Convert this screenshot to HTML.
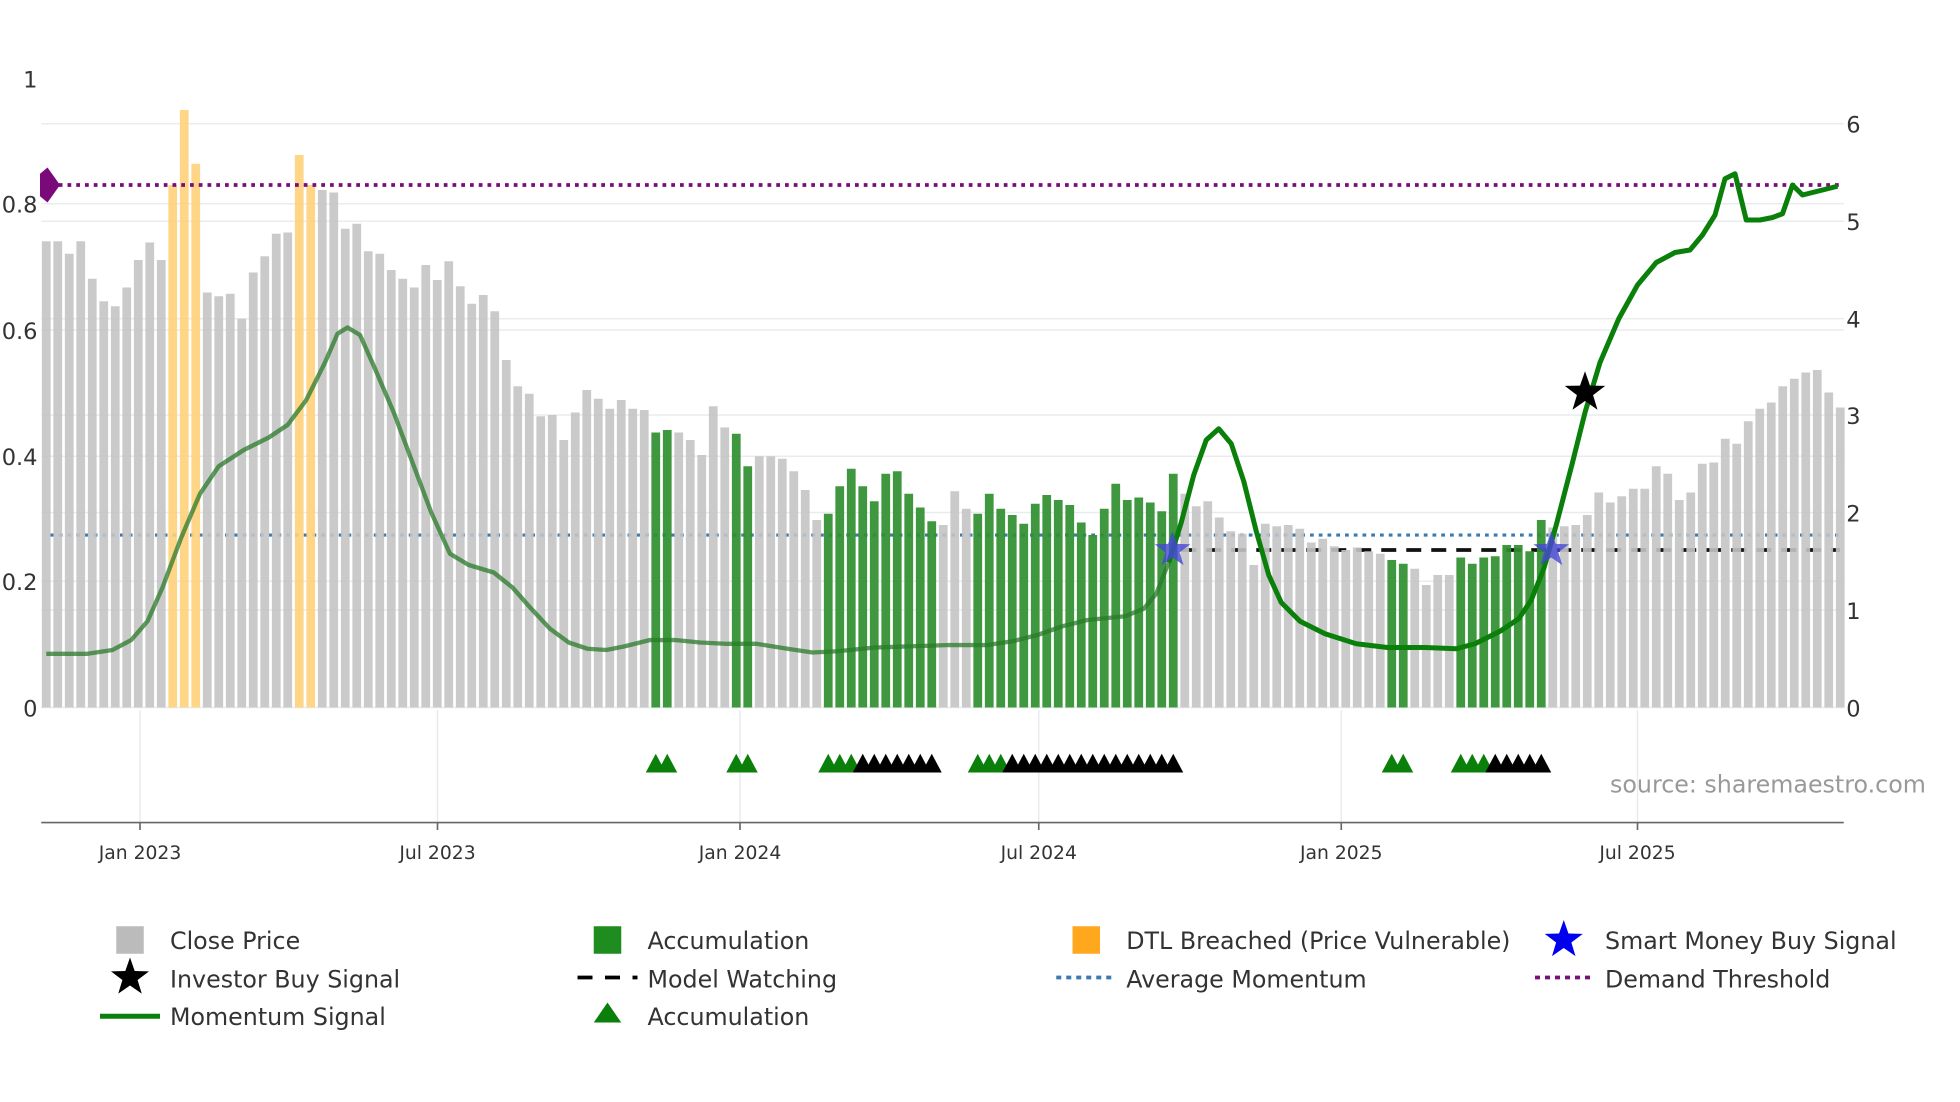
<!DOCTYPE html>
<html><head><meta charset="utf-8"><style>
html,body{margin:0;padding:0;background:#fff;}
svg{display:block;}
text{font-family:"DejaVu Sans","Liberation Sans",sans-serif;fill:#333;}
</style></head><body>
<svg width="1960" height="1102" viewBox="0 0 1568 881.6" preserveAspectRatio="none" xmlns="http://www.w3.org/2000/svg">
<defs>
<path id="st" d="M0,-1 L.235,-.324 L.951,-.309 L.380,.124 L.588,.809 L0,.4 L-.588,.809 L-.380,.124 L-.951,-.309 L-.235,-.324Z"/>
<path id="tri" d="M-8,7 L0,-8 L8,7Z"/>
</defs>
<rect width="1568" height="882" fill="#fff"/>
<!-- grid -->
<g stroke="#e8ecf0" stroke-width="1.2">
<line x1="33" x2="1475" y1="99" y2="99"/><line x1="33" x2="1475" y1="177" y2="177"/><line x1="33" x2="1475" y1="255" y2="255"/><line x1="33" x2="1475" y1="332" y2="332"/><line x1="33" x2="1475" y1="410" y2="410"/><line x1="33" x2="1475" y1="488" y2="488"/>
<line x1="33" x2="1475" y1="163" y2="163"/><line x1="33" x2="1475" y1="264" y2="264"/><line x1="33" x2="1475" y1="365" y2="365"/><line x1="33" x2="1475" y1="465" y2="465"/><line x1="33" x2="1475" y1="566" y2="566"/>
<line x1="112" x2="112" y1="568" y2="658"/><line x1="350" x2="350" y1="568" y2="658"/><line x1="592" x2="592" y1="568" y2="658"/><line x1="831" x2="831" y1="568" y2="658"/><line x1="1073" x2="1073" y1="568" y2="658"/><line x1="1310" x2="1310" y1="568" y2="658"/>
</g>
<line x1="40" x2="1475" y1="428" y2="428" stroke="#3a7ab0" stroke-width="2.5" stroke-dasharray="3,4"/>
<line x1="945" x2="1472" y1="440" y2="440" stroke="#111" stroke-width="3" stroke-dasharray="12,8"/>
<!-- bars gray -->
<g fill="#c4c4c4" fill-opacity="0.9">
<rect x="33.5" y="193" width="7" height="373"/><rect x="42.7" y="193" width="7" height="373"/><rect x="51.9" y="203" width="7" height="363"/><rect x="61.1" y="193" width="7" height="373"/><rect x="70.3" y="223" width="7" height="343"/><rect x="79.5" y="241" width="7" height="325"/><rect x="88.7" y="245" width="7" height="321"/><rect x="97.9" y="230" width="7" height="336"/><rect x="107.1" y="208" width="7" height="358"/><rect x="116.3" y="194" width="7" height="372"/><rect x="125.5" y="208" width="7" height="358"/>
<rect x="162.3" y="234" width="7" height="332"/><rect x="171.5" y="237" width="7" height="329"/><rect x="180.7" y="235" width="7" height="331"/><rect x="189.9" y="255" width="7" height="311"/><rect x="199.1" y="218" width="7" height="348"/><rect x="208.3" y="205" width="7" height="361"/><rect x="217.5" y="187" width="7" height="379"/><rect x="226.7" y="186" width="7" height="380"/>
<rect x="254.3" y="152" width="7" height="414"/><rect x="263.5" y="154" width="7" height="412"/><rect x="272.7" y="183" width="7" height="383"/><rect x="281.9" y="179" width="7" height="387"/><rect x="291.1" y="201" width="7" height="365"/><rect x="300.3" y="203" width="7" height="363"/><rect x="309.5" y="216" width="7" height="350"/><rect x="318.7" y="223" width="7" height="343"/><rect x="327.9" y="230" width="7" height="336"/><rect x="337.1" y="212" width="7" height="354"/><rect x="346.3" y="224" width="7" height="342"/><rect x="355.5" y="209" width="7" height="357"/><rect x="364.7" y="229" width="7" height="337"/><rect x="373.9" y="243" width="7" height="323"/><rect x="383.1" y="236" width="7" height="330"/><rect x="392.3" y="249" width="7" height="317"/><rect x="401.5" y="288" width="7" height="278"/><rect x="410.7" y="309" width="7" height="257"/><rect x="419.9" y="315" width="7" height="251"/><rect x="429.1" y="333" width="7" height="233"/><rect x="438.3" y="332" width="7" height="234"/><rect x="447.5" y="352" width="7" height="214"/><rect x="456.7" y="330" width="7" height="236"/><rect x="465.9" y="312" width="7" height="254"/><rect x="475.1" y="319" width="7" height="247"/><rect x="484.3" y="327" width="7" height="239"/><rect x="493.5" y="320" width="7" height="246"/><rect x="502.7" y="327" width="7" height="239"/><rect x="511.9" y="328" width="7" height="238"/>
<rect x="539.5" y="346" width="7" height="220"/><rect x="548.7" y="352" width="7" height="214"/><rect x="557.9" y="364" width="7" height="202"/><rect x="567.1" y="325" width="7" height="241"/><rect x="576.3" y="342" width="7" height="224"/>
<rect x="603.9" y="365" width="7" height="201"/><rect x="613.1" y="365" width="7" height="201"/><rect x="622.3" y="367" width="7" height="199"/><rect x="631.5" y="377" width="7" height="189"/><rect x="640.7" y="392" width="7" height="174"/><rect x="649.9" y="416" width="7" height="150"/>
<rect x="751.1" y="420" width="7" height="146"/><rect x="760.3" y="393" width="7" height="173"/><rect x="769.5" y="407" width="7" height="159"/>
<rect x="944.3" y="395" width="7" height="171"/><rect x="953.5" y="405" width="7" height="161"/><rect x="962.7" y="401" width="7" height="165"/><rect x="971.9" y="414" width="7" height="152"/><rect x="981.1" y="425" width="7" height="141"/><rect x="990.3" y="427" width="7" height="139"/><rect x="999.5" y="452" width="7" height="114"/><rect x="1008.7" y="419" width="7" height="147"/><rect x="1017.9" y="421" width="7" height="145"/><rect x="1027.1" y="420" width="7" height="146"/><rect x="1036.3" y="423" width="7" height="143"/><rect x="1045.5" y="434" width="7" height="132"/><rect x="1054.7" y="431" width="7" height="135"/><rect x="1063.9" y="437" width="7" height="129"/><rect x="1073.1" y="440" width="7" height="126"/><rect x="1082.3" y="438" width="7" height="128"/><rect x="1091.5" y="441" width="7" height="125"/><rect x="1100.7" y="443" width="7" height="123"/>
<rect x="1128.3" y="455" width="7" height="111"/><rect x="1137.5" y="468" width="7" height="98"/><rect x="1146.7" y="460" width="7" height="106"/><rect x="1155.9" y="460" width="7" height="106"/>
<rect x="1238.7" y="422" width="7" height="144"/><rect x="1247.9" y="421" width="7" height="145"/><rect x="1257.1" y="420" width="7" height="146"/><rect x="1266.3" y="412" width="7" height="154"/><rect x="1275.5" y="394" width="7" height="172"/><rect x="1284.7" y="402" width="7" height="164"/><rect x="1293.9" y="397" width="7" height="169"/><rect x="1303.1" y="391" width="7" height="175"/><rect x="1312.3" y="391" width="7" height="175"/><rect x="1321.5" y="373" width="7" height="193"/><rect x="1330.7" y="379" width="7" height="187"/><rect x="1339.9" y="400" width="7" height="166"/><rect x="1349.1" y="394" width="7" height="172"/><rect x="1358.3" y="371" width="7" height="195"/><rect x="1367.5" y="370" width="7" height="196"/><rect x="1376.7" y="351" width="7" height="215"/><rect x="1385.9" y="355" width="7" height="211"/><rect x="1395.1" y="337" width="7" height="229"/><rect x="1404.3" y="327" width="7" height="239"/><rect x="1413.5" y="322" width="7" height="244"/><rect x="1422.7" y="309" width="7" height="257"/><rect x="1431.9" y="303" width="7" height="263"/><rect x="1441.1" y="298" width="7" height="268"/><rect x="1450.3" y="296" width="7" height="270"/><rect x="1459.5" y="314" width="7" height="252"/><rect x="1468.7" y="326" width="7" height="240"/>
</g>
<g fill="#ffd27a" fill-opacity="0.9">
<rect x="134.7" y="148" width="7" height="418"/><rect x="143.9" y="88" width="7" height="478"/><rect x="153.1" y="131" width="7" height="435"/><rect x="235.9" y="124" width="7" height="442"/><rect x="245.1" y="148" width="7" height="418"/>
</g>
<g fill="#2f8f2f" fill-opacity="0.92">
<rect x="521.1" y="346" width="7" height="220"/><rect x="530.3" y="344" width="7" height="222"/>
<rect x="585.5" y="347" width="7" height="219"/><rect x="594.7" y="373" width="7" height="193"/>
<rect x="659.1" y="411" width="7" height="155"/><rect x="668.3" y="389" width="7" height="177"/><rect x="677.5" y="375" width="7" height="191"/><rect x="686.7" y="389" width="7" height="177"/><rect x="695.9" y="401" width="7" height="165"/><rect x="705.1" y="379" width="7" height="187"/><rect x="714.3" y="377" width="7" height="189"/><rect x="723.5" y="395" width="7" height="171"/><rect x="732.7" y="406" width="7" height="160"/><rect x="741.9" y="417" width="7" height="149"/>
<rect x="778.7" y="411" width="7" height="155"/><rect x="787.9" y="395" width="7" height="171"/><rect x="797.1" y="407" width="7" height="159"/><rect x="806.3" y="412" width="7" height="154"/><rect x="815.5" y="419" width="7" height="147"/><rect x="824.7" y="403" width="7" height="163"/><rect x="833.9" y="396" width="7" height="170"/><rect x="843.1" y="400" width="7" height="166"/><rect x="852.3" y="404" width="7" height="162"/><rect x="861.5" y="418" width="7" height="148"/><rect x="870.7" y="428" width="7" height="138"/><rect x="879.9" y="407" width="7" height="159"/><rect x="889.1" y="387" width="7" height="179"/><rect x="898.3" y="400" width="7" height="166"/><rect x="907.5" y="398" width="7" height="168"/><rect x="916.7" y="402" width="7" height="164"/><rect x="925.9" y="409" width="7" height="157"/><rect x="935.1" y="379" width="7" height="187"/>
<rect x="1109.9" y="448" width="7" height="118"/><rect x="1119.1" y="451" width="7" height="115"/>
<rect x="1165.1" y="446" width="7" height="120"/><rect x="1174.3" y="451" width="7" height="115"/><rect x="1183.5" y="446" width="7" height="120"/><rect x="1192.7" y="445" width="7" height="121"/><rect x="1201.9" y="436" width="7" height="130"/><rect x="1211.1" y="436" width="7" height="130"/><rect x="1220.3" y="441" width="7" height="125"/><rect x="1229.5" y="416" width="7" height="150"/>
</g>
<!-- momentum line faded part -->
<polyline fill="none" stroke="#2a7a2a" stroke-opacity="0.75" stroke-width="3.5" stroke-linejoin="round" points="37,523 70,523 90,520 105,512 118,497 130,470 145,430 160,395 175,373 195,360 215,350 230,340 245,320 260,290 270,267 278,262 288,268 300,295 315,330 330,370 345,410 360,443 375,452 395,458 410,470 425,487 440,503 455,514 470,519 485,520 500,517 520,512 540,512 560,514 580,515 605,515 630,519 650,522 670,521 700,518 730,517 760,516 790,516 810,513 830,508 850,501 870,496 900,493 915,487 925,475 935,450"/>
<!-- demand threshold -->
<line x1="40" x2="1475" y1="148" y2="148" stroke="#7a0f7a" stroke-width="3" stroke-dasharray="3,4"/>
<path d="M32,139 L38,134 L48,148 L38,162 L32,157Z" fill="#7a0a7a"/>
<!-- bright momentum -->
<polyline fill="none" stroke="#0a800a" stroke-width="4" stroke-linejoin="round" points="935,450 945,418 955,380 965,352 975,343 985,355 995,385 1005,425 1015,460 1025,482 1040,497 1060,507 1085,515 1110,518 1140,518 1165,519 1180,515 1200,505 1215,495 1225,480 1235,455 1245,420 1258,370 1268,330 1280,290 1295,255 1310,228 1325,210 1340,202 1352,200 1362,188 1372,172 1380,143 1388,139 1397,176 1408,176 1418,174 1426,171 1434,148 1442,156 1470,149"/>
<!-- stars -->
<use href="#st" transform="translate(938,440) scale(15)" fill="#4646d8" fill-opacity="0.8"/>
<use href="#st" transform="translate(1241,440) scale(15)" fill="#4646d8" fill-opacity="0.8"/>
<use href="#st" transform="translate(1268,314) scale(17)" fill="#000"/>
<!-- triangles -->
<g fill="#0a800a">
<use href="#tri" x="524.6" y="611"/><use href="#tri" x="533.8" y="611"/><use href="#tri" x="589" y="611"/><use href="#tri" x="598.2" y="611"/>
<use href="#tri" x="662.6" y="611"/><use href="#tri" x="671.8" y="611"/><use href="#tri" x="681" y="611"/>
<use href="#tri" x="782.2" y="611"/><use href="#tri" x="791.4" y="611"/><use href="#tri" x="800.6" y="611"/>
<use href="#tri" x="1113.4" y="611"/><use href="#tri" x="1122.6" y="611"/>
<use href="#tri" x="1168.6" y="611"/><use href="#tri" x="1177.8" y="611"/><use href="#tri" x="1187" y="611"/>
</g>
<g fill="#000">
<use href="#tri" x="690.2" y="611"/><use href="#tri" x="699.4" y="611"/><use href="#tri" x="708.6" y="611"/><use href="#tri" x="717.8" y="611"/><use href="#tri" x="727" y="611"/><use href="#tri" x="736.2" y="611"/><use href="#tri" x="745.4" y="611"/>
<use href="#tri" x="809.8" y="611"/><use href="#tri" x="819" y="611"/><use href="#tri" x="828.2" y="611"/><use href="#tri" x="837.4" y="611"/><use href="#tri" x="846.6" y="611"/><use href="#tri" x="855.8" y="611"/><use href="#tri" x="865" y="611"/><use href="#tri" x="874.2" y="611"/><use href="#tri" x="883.4" y="611"/><use href="#tri" x="892.6" y="611"/><use href="#tri" x="901.8" y="611"/><use href="#tri" x="911" y="611"/><use href="#tri" x="920.2" y="611"/><use href="#tri" x="929.4" y="611"/><use href="#tri" x="938.6" y="611"/>
<use href="#tri" x="1196.2" y="611"/><use href="#tri" x="1205.4" y="611"/><use href="#tri" x="1214.6" y="611"/><use href="#tri" x="1223.8" y="611"/><use href="#tri" x="1233" y="611"/>
</g>
<!-- x axis -->
<line x1="33" x2="1475" y1="658" y2="658" stroke="#666" stroke-width="1.3"/>
<g stroke="#666" stroke-width="1.3"><line x1="112" x2="112" y1="658" y2="664"/><line x1="350" x2="350" y1="658" y2="664"/><line x1="592" x2="592" y1="658" y2="664"/><line x1="831" x2="831" y1="658" y2="664"/><line x1="1073" x2="1073" y1="658" y2="664"/><line x1="1310" x2="1310" y1="658" y2="664"/></g>
<g font-size="15" text-anchor="middle">
<text x="112" y="687">Jan 2023</text><text x="350" y="687">Jul 2023</text><text x="592" y="687">Jan 2024</text><text x="831" y="687">Jul 2024</text><text x="1073" y="687">Jan 2025</text><text x="1310" y="687">Jul 2025</text>
</g>
<g font-size="18" text-anchor="end">
<text x="30" y="70">1</text><text x="30" y="170">0.8</text><text x="30" y="271">0.6</text><text x="30" y="372">0.4</text><text x="30" y="472">0.2</text><text x="30" y="573">0</text>
</g>
<g font-size="18">
<text x="1477" y="106">6</text><text x="1477" y="184">5</text><text x="1477" y="262">4</text><text x="1477" y="339">3</text><text x="1477" y="417">2</text><text x="1477" y="495">1</text><text x="1477" y="573">0</text>
</g>
<text x="1288" y="634" font-size="19" style="fill:#999">source: sharemaestro.com</text>
<!-- legend -->
<rect x="93" y="741" width="22" height="22" fill="#bbb"/>
<use href="#st" transform="translate(104,782) scale(16)" fill="#000"/>
<line x1="80" x2="128" y1="813" y2="813" stroke="#0a800a" stroke-width="4"/>
<rect x="475" y="741" width="22" height="22" fill="#1e8c1e"/>
<line x1="462" x2="510" y1="782" y2="782" stroke="#000" stroke-width="3" stroke-dasharray="12,10"/>
<path d="M475,818 L486,802 L497,818Z" fill="#0a800a"/>
<rect x="858" y="741" width="22" height="22" fill="#ffa81e"/>
<line x1="845" x2="893" y1="782" y2="782" stroke="#3a7ab0" stroke-width="3" stroke-dasharray="4,4"/>
<use href="#st" transform="translate(1251,752) scale(16)" fill="#0000ee"/>
<line x1="1228" x2="1276" y1="782" y2="782" stroke="#7a0f7a" stroke-width="3" stroke-dasharray="4,4"/>
<g font-size="19">
<text x="136" y="759">Close Price</text><text x="136" y="790">Investor Buy Signal</text><text x="136" y="820">Momentum Signal</text>
<text x="518" y="759">Accumulation</text><text x="518" y="790">Model Watching</text><text x="518" y="820">Accumulation</text>
<text x="901" y="759">DTL Breached (Price Vulnerable)</text><text x="901" y="790">Average Momentum</text>
<text x="1284" y="759">Smart Money Buy Signal</text><text x="1284" y="790">Demand Threshold</text>
</g>
</svg>
</body></html>
